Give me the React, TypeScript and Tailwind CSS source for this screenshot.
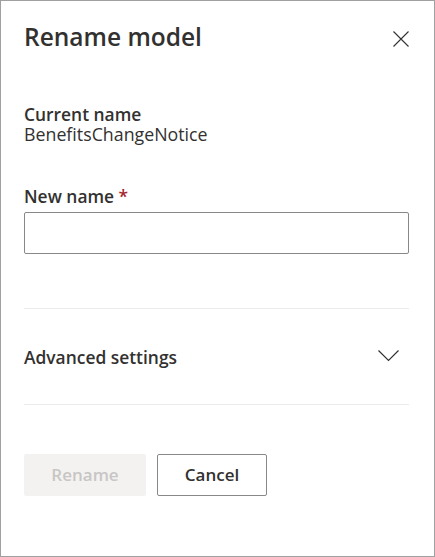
export default function App() {
    return (
        <div
            className="w-[435px] h-[557px] bg-white border border-[#a0a0a0] flex flex-col text-[#323130]"
            style={{ fontFamily: '"Open Sans", "Noto Sans", sans-serif' }}
        >
            {/* Header */}
            <div className="flex items-start justify-between pl-[23px] pr-[25px] pt-[20px]">
                <h2 className="text-[24.5px] leading-[32px] font-semibold">Rename model</h2>
                <button className="mt-[10px] text-[#323130]">
                    <svg width="16" height="16" viewBox="0 0 16 16" fill="none" stroke="currentColor" strokeWidth="1.1">
                        <path d="M0.5 0.5 L15.5 15.5 M15.5 0.5 L0.5 15.5" />
                    </svg>
                </button>
            </div>

            {/* Body */}
            <div className="px-[23px] pt-[51px] flex flex-col">
                <div className="text-[17.4px] leading-[20px] font-semibold">Current name</div>
                <div className="text-[17.8px] leading-[20px]">BenefitsChangeNotice</div>

                <label className="mt-[42px] text-[17.4px] leading-[20px] font-semibold">
                    New name <span className="text-[#a4262c]">*</span>
                </label>
                <input
                    type="text"
                    className="mt-[6px] h-[42px] w-[385px] border border-[#8a8886] rounded-[2px] px-2 text-[16px] outline-none"
                />

                <div className="mt-[54px] border-t border-[#edebe9] w-[385px]" />

                <button className="flex items-center justify-between w-[385px] h-[95px] pr-[10px]">
                    <span className="text-[17.4px] leading-[20px] font-semibold">Advanced settings</span>
                    <svg width="21" height="12" viewBox="0 0 21 12" fill="none" stroke="currentColor" strokeWidth="1.2" className="mt-[-2px]">
                        <path d="M0.5 0.5 L10.5 10.5 L20.5 0.5" />
                    </svg>
                </button>

                <div className="border-t border-[#edebe9] w-[385px]" />

                {/* Footer */}
                <div className="mt-[49px] flex gap-[11px]">
                    <button className="w-[122px] h-[42px] rounded-[2px] bg-[#f3f2f1] text-[#c8c6c4] text-[17px] font-semibold">
                        Rename
                    </button>
                    <button className="w-[110px] h-[42px] rounded-[2px] border border-[#8a8886] bg-white text-[#323130] text-[17px] font-semibold">
                        Cancel
                    </button>
                </div>
            </div>
        </div>
    );
}
